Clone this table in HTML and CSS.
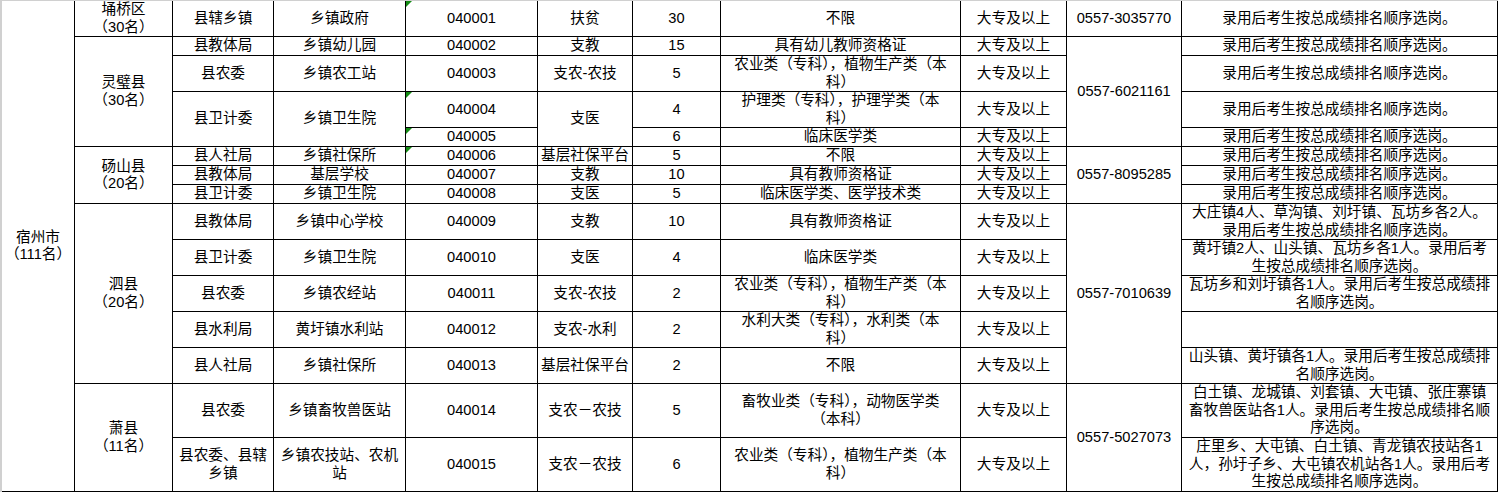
FILE: index.html
```html
<!DOCTYPE html>
<html lang="zh-CN">
<head>
<meta charset="utf-8">
<title>宿州市岗位表</title>
<link rel="stylesheet" href="styles.css">
</head>
<body>
<div class="sheet">
<table class="grid">
<colgroup>
<col class="c1"><col class="c2"><col class="c3"><col class="c4"><col class="c5"><col class="c6"><col class="c7"><col class="c8"><col class="c9"><col class="c10"><col class="c11">
</colgroup>
<tbody>
<tr class="r2">
<td rowspan="15">宿州市<br>（111名）</td>
<td>埇桥区<br>（30名）</td>
<td>县辖乡镇</td><td>乡镇政府</td><td class="mark">040001</td><td>扶贫</td><td>30</td><td>不限</td><td>大专及以上</td><td>0557-3035770</td><td>录用后考生按总成绩排名顺序选岗。</td>
</tr>
<tr class="r1">
<td rowspan="4">灵璧县<br>（30名）</td>
<td>县教体局</td><td>乡镇幼儿园</td><td>040002</td><td>支教</td><td>15</td><td>具有幼儿教师资格证</td><td>大专及以上</td><td rowspan="4">0557-6021161</td><td>录用后考生按总成绩排名顺序选岗。</td>
</tr>
<tr class="r2">
<td>县农委</td><td>乡镇农工站</td><td>040003</td><td>支农-农技</td><td>5</td><td>农业类（专科），植物生产类（本<br>科）</td><td>大专及以上</td><td>录用后考生按总成绩排名顺序选岗。</td>
</tr>
<tr class="r2">
<td rowspan="2">县卫计委</td><td rowspan="2">乡镇卫生院</td><td class="mark">040004</td><td rowspan="2">支医</td><td>4</td><td>护理类（专科），护理学类（本<br>科）</td><td>大专及以上</td><td>录用后考生按总成绩排名顺序选岗。</td>
</tr>
<tr class="r1">
<td class="mark">040005</td><td>6</td><td>临床医学类</td><td>大专及以上</td><td>录用后考生按总成绩排名顺序选岗。</td>
</tr>
<tr class="r1">
<td rowspan="3">砀山县<br>（20名）</td>
<td>县人社局</td><td>乡镇社保所</td><td class="mark">040006</td><td>基层社保平台</td><td>5</td><td>不限</td><td>大专及以上</td><td rowspan="3">0557-8095285</td><td>录用后考生按总成绩排名顺序选岗。</td>
</tr>
<tr class="r1">
<td>县教体局</td><td>基层学校</td><td>040007</td><td>支教</td><td>10</td><td>具有教师资格证</td><td>大专及以上</td><td>录用后考生按总成绩排名顺序选岗。</td>
</tr>
<tr class="r1">
<td>县卫计委</td><td>乡镇卫生院</td><td>040008</td><td>支医</td><td>5</td><td>临床医学类、医学技术类</td><td>大专及以上</td><td>录用后考生按总成绩排名顺序选岗。</td>
</tr>
<tr class="r2">
<td rowspan="5">泗县<br>（20名）</td>
<td>县教体局</td><td>乡镇中心学校</td><td>040009</td><td>支教</td><td>10</td><td>具有教师资格证</td><td>大专及以上</td><td rowspan="5">0557-7010639</td><td>大庄镇4人、草沟镇、刘圩镇、瓦坊乡各2人。<br>录用后考生按总成绩排名顺序选岗。</td>
</tr>
<tr class="r2">
<td>县卫计委</td><td>乡镇卫生院</td><td>040010</td><td>支医</td><td>4</td><td>临床医学类</td><td>大专及以上</td><td>黄圩镇2人、山头镇、瓦坊乡各1人。录用后考<br>生按总成绩排名顺序选岗。</td>
</tr>
<tr class="r2">
<td>县农委</td><td>乡镇农经站</td><td>040011</td><td>支农-农技</td><td>2</td><td>农业类（专科），植物生产类（本<br>科）</td><td>大专及以上</td><td>瓦坊乡和刘圩镇各1人。录用后考生按总成绩排<br>名顺序选岗。</td>
</tr>
<tr class="r2">
<td>县水利局</td><td>黄圩镇水利站</td><td>040012</td><td>支农-水利</td><td>2</td><td>水利大类（专科），水利类（本<br>科）</td><td>大专及以上</td><td></td>
</tr>
<tr class="r2">
<td>县人社局</td><td>乡镇社保所</td><td>040013</td><td>基层社保平台</td><td>2</td><td>不限</td><td>大专及以上</td><td>山头镇、黄圩镇各1人。录用后考生按总成绩排<br>名顺序选岗。</td>
</tr>
<tr class="r3">
<td rowspan="2">萧县<br>（11名）</td>
<td>县农委</td><td>乡镇畜牧兽医站</td><td>040014</td><td>支农－农技</td><td>5</td><td>畜牧业类（专科），动物医学类<br>（本科）</td><td>大专及以上</td><td rowspan="2">0557-5027073</td><td>白土镇、龙城镇、刘套镇、大屯镇、张庄寨镇<br>畜牧兽医站各1人。录用后考生按总成绩排名顺<br>序选岗。</td>
</tr>
<tr class="r3">
<td>县农委、县辖<br>乡镇</td><td>乡镇农技站、农机<br>站</td><td>040015</td><td>支农－农技</td><td>6</td><td>农业类（专科），植物生产类（本<br>科）</td><td>大专及以上</td><td>庄里乡、大屯镇、白土镇、青龙镇农技站各1<br>人，孙圩子乡、大屯镇农机站各1人。录用后考<br>生按总成绩排名顺序选岗。</td>
</tr>
</tbody>
</table>
</div>
</body>
</html>
```

FILE: styles.css
```css
html, body {
  margin: 0;
  padding: 0;
  background: #ffffff;
  overflow: hidden;
}

.sheet {
  width: 1496px;
  border-left: 2px solid #d0d0d0;
  border-top: 1px solid #d0d0d0;
}

.grid {
  width: 1496px;
  table-layout: fixed;
  border-collapse: separate;
  border-spacing: 0;
  font-family: "Liberation Sans", "Noto Sans CJK SC", sans-serif;
  font-size: 14.67px;
  line-height: 17.5px;
  color: #000000;
}

.c1 { width: 73px; }
.c2 { width: 98px; }
.c3 { width: 101px; }
.c4 { width: 132px; }
.c5 { width: 132px; }
.c6 { width: 95px; }
.c7 { width: 88px; }
.c8 { width: 240px; }
.c9 { width: 106px; }
.c10 { width: 115px; }
.c11 { width: 316px; }

.r1 { height: 19px; }
.r2 { height: 36px; }
.r3 { height: 54px; }

.grid td {
  box-sizing: border-box;
  border-right: 1px solid #000000;
  border-bottom: 1px solid #000000;
  padding: 0 1px;
  text-align: center;
  vertical-align: middle;
  white-space: nowrap;
}

.grid td.mark {
  position: relative;
}

.grid td.mark::before {
  content: "";
  position: absolute;
  top: 0;
  left: 0;
  width: 0;
  height: 0;
  border-top: 6px solid #148c14;
  border-right: 6px solid transparent;
}
```
